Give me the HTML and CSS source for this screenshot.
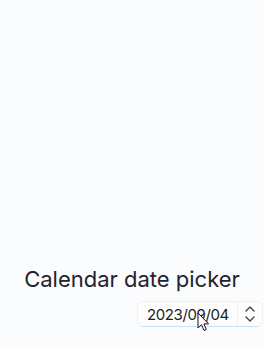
FILE: index.html
```html
<!DOCTYPE html>
<html>
<head>
<meta charset="utf-8">
<link rel="stylesheet" href="styles.css">
</head>
<body>
<div class="page">
  <h1 class="title">Calendar date picker</h1>
  <div class="row">
    <div class="picker">
      <span class="value">2023/09/04</span>
      <div class="spin">
        <svg class="chev" width="12" height="8" viewBox="0 0 12 8"><path d="M2 6 L6 2 L10 6" fill="none" stroke="#3a3f4a" stroke-width="1.3" stroke-linecap="round" stroke-linejoin="round"/></svg>
        <svg class="chev" width="12" height="8" viewBox="0 0 12 8"><path d="M2 2 L6 6 L10 2" fill="none" stroke="#3a3f4a" stroke-width="1.3" stroke-linecap="round" stroke-linejoin="round"/></svg>
      </div>
      <div class="underline"></div>
    </div>
  </div>
  <svg class="cursor" width="13" height="20" viewBox="0 0 13 20"><path d="M1 1 L1 16 L4.5 12.7 L7 18.5 L9.3 17.5 L6.9 11.9 L11.6 11.9 Z" fill="#fff" stroke="#111" stroke-width="1" stroke-linejoin="round"/></svg>
</div>
</body>
</html>
```
FILE: styles.css
```css
html, body {
  margin: 0;
  padding: 0;
  background: #fbfcfe;
}
.page {
  position: relative;
  width: 264px;
  height: 350px;
  display: flex;
  flex-direction: column;
  justify-content: flex-end;
  padding-bottom: 23px;
  box-sizing: border-box;
  font-family: Inter, "Noto Sans", sans-serif;
}
.title {
  margin: 0 0 8px 0;
  font-size: 22px;
  font-weight: 400;
  line-height: 28px;
  color: #1f232b;
  text-align: center;
}
.row {
  display: flex;
  justify-content: flex-end;
  padding-right: 1px;
}
.picker {
  position: relative;
  display: flex;
  align-items: center;
  width: 126px;
  height: 26px;
  box-sizing: border-box;
  border: 1px solid #eef0f4;
  border-radius: 6px;
  background: #fdfdfe;
}
.value {
  flex: 1;
  font-size: 15px;
  color: #1b1e25;
  padding-left: 9px;
  letter-spacing: -0.4px;
}
.spin {
  width: 24px;
  height: 100%;
  border-left: 1px solid #eef0f4;
  display: flex;
  flex-direction: column;
  align-items: center;
  justify-content: center;
  gap: 2px;
}
.chev { display: block; }
.underline {
  position: absolute;
  left: 4px;
  right: 4px;
  bottom: -1px;
  height: 1px;
  background: #c9e2f5;
}
.cursor {
  position: absolute;
  left: 197px;
  top: 312px;
}
```
